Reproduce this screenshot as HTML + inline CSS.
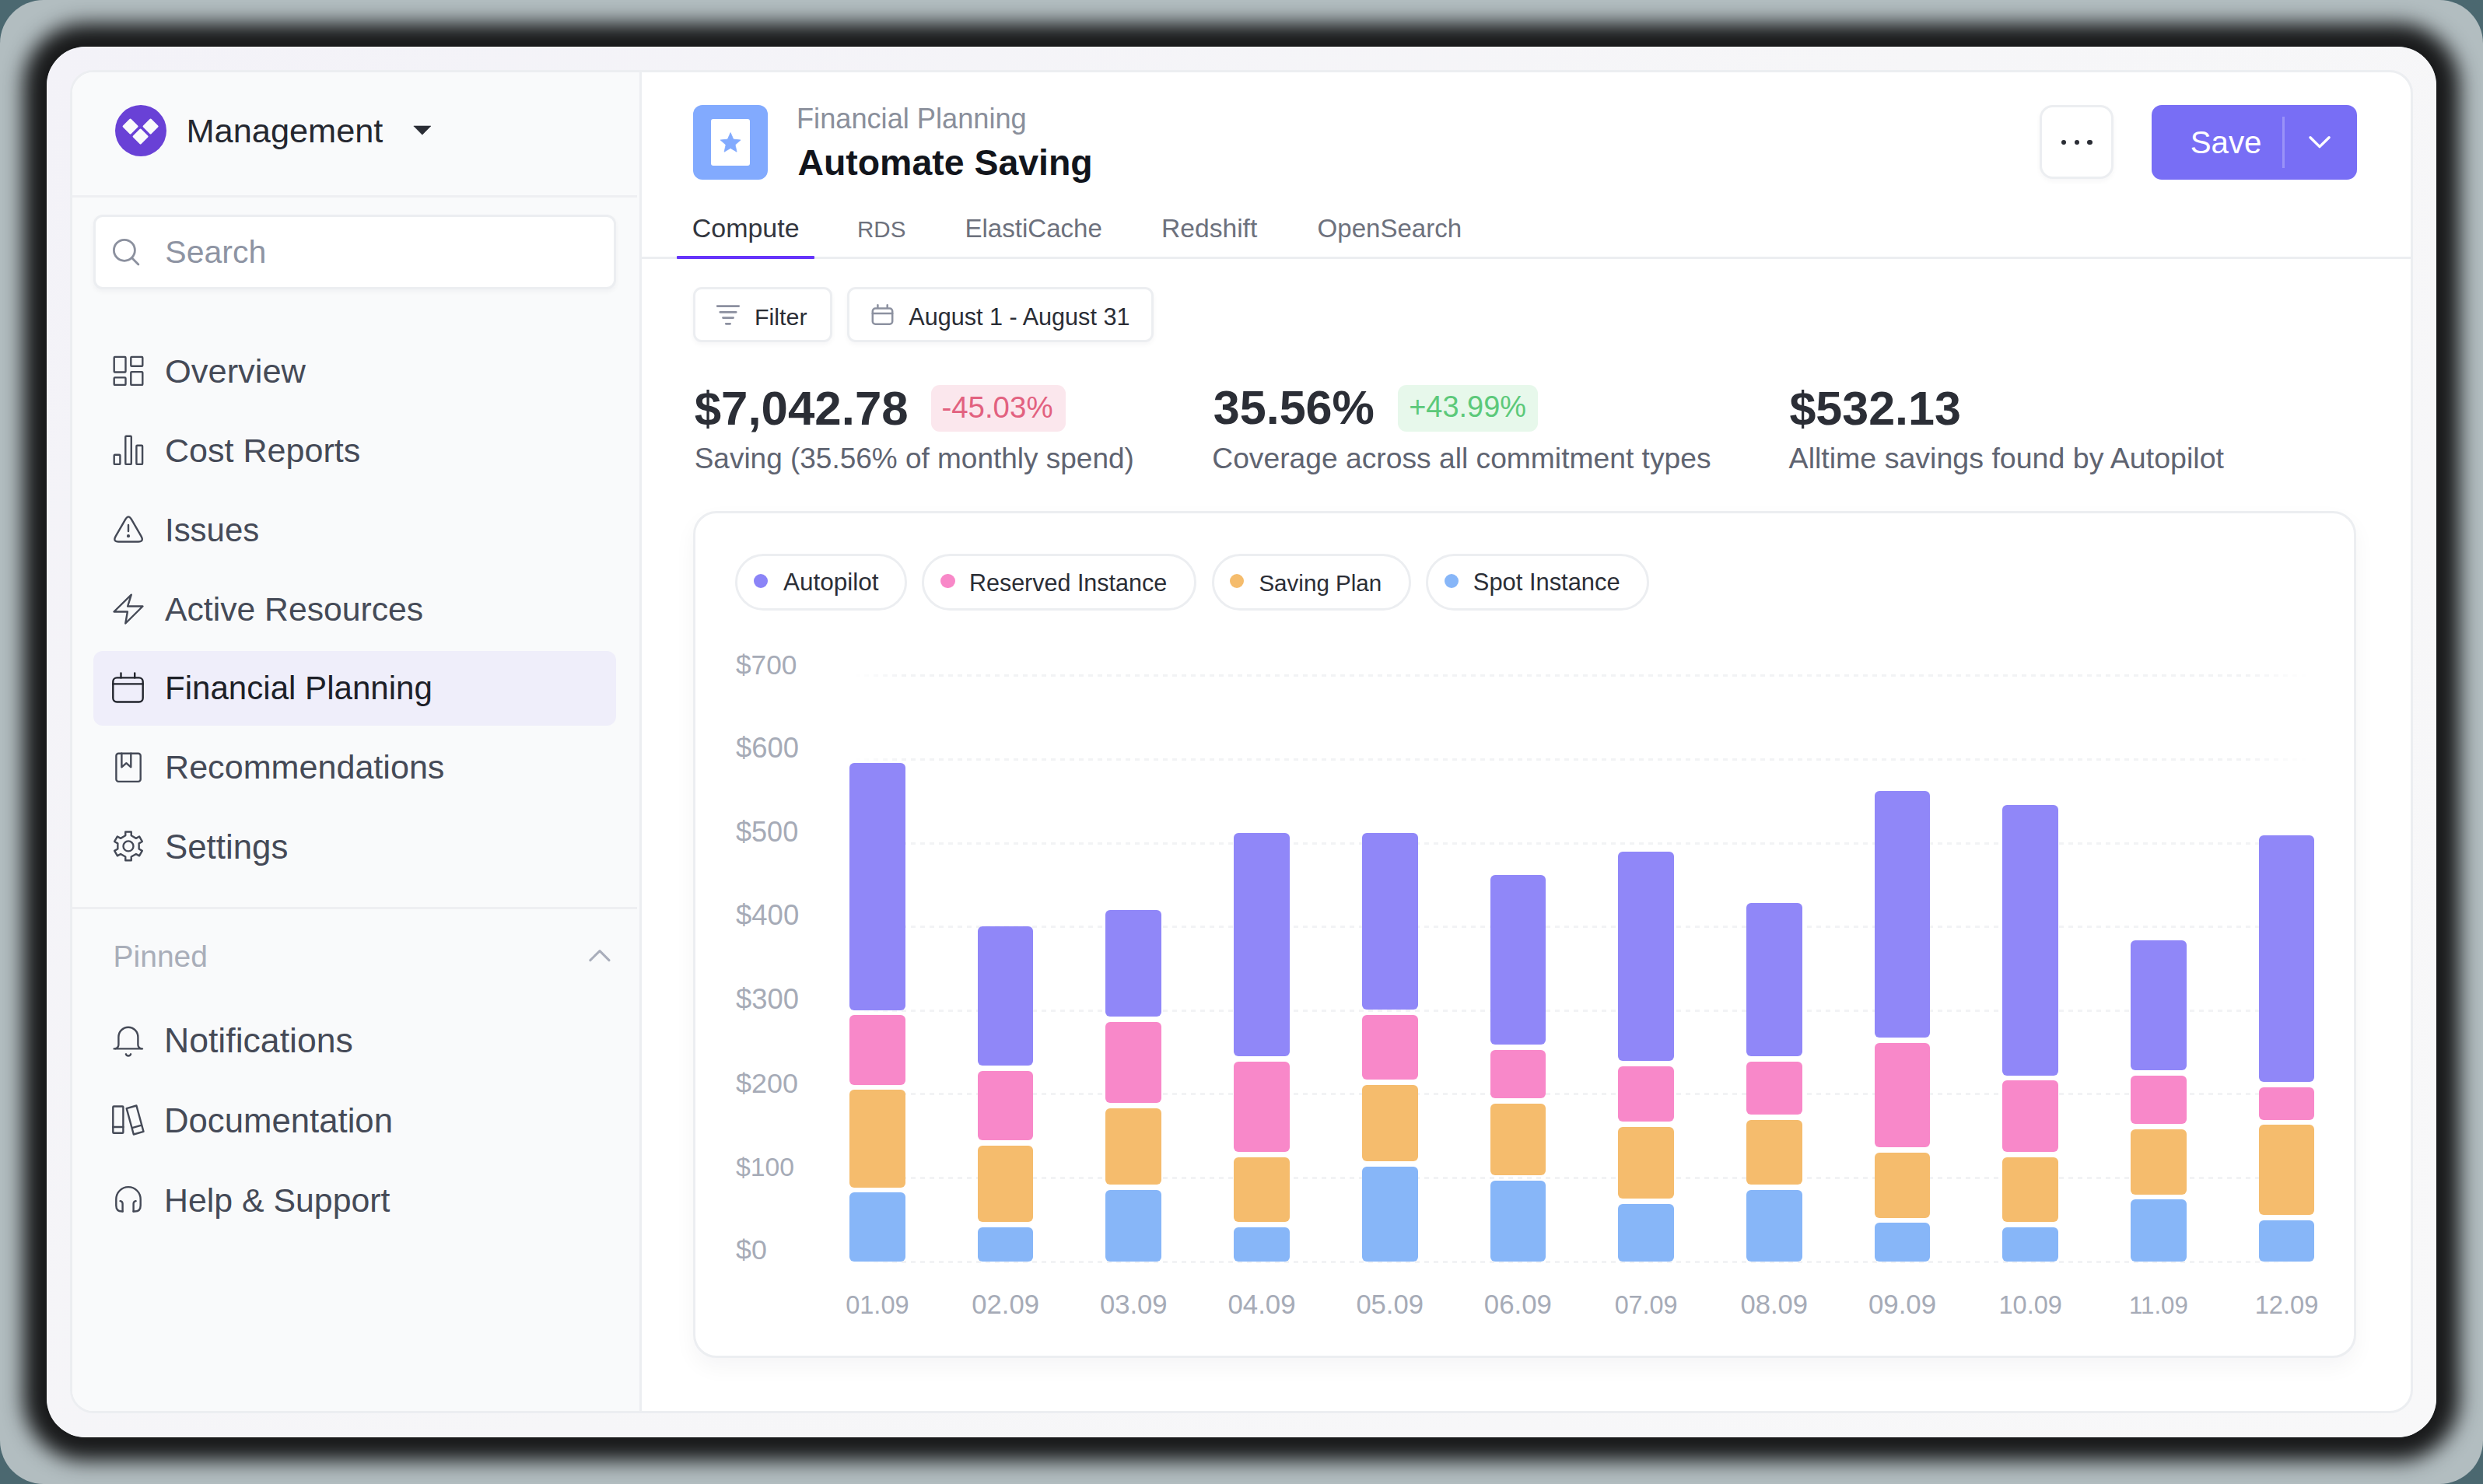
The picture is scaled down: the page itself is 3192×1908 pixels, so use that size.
<!DOCTYPE html>
<html><head><meta charset="utf-8"><style>
html,body{margin:0;padding:0;width:3192px;height:1908px;overflow:hidden;background:#4b6870;}
.a{position:absolute;}
.t{position:absolute;white-space:nowrap;line-height:1;font-family:"Liberation Sans",sans-serif;}
svg.a{overflow:visible}
</style></head><body>
<div class="a" style="left:0;top:0;width:3192px;height:1908px;border-radius:56px;background:rgb(178,189,192);"></div>
<div class="a" style="left:60px;top:60px;width:3072px;height:1788px;border-radius:50px;background:linear-gradient(135deg,#f3f2f8 0%,#f6f6f8 50%,#f8f8f9 100%);box-shadow:0 0 26px 30px rgb(25,26,27);"></div>
<div class="a" style="left:90px;top:90px;width:3012px;height:1727px;border-radius:30px;background:#ffffff;border:3px solid #eceef1;box-sizing:border-box;overflow:hidden"><div class="a" style="left:0;top:0;width:732px;height:1727px;background:#f9fafb;border-right:3px solid #eceef1;box-sizing:border-box"></div></div>
<div class="a" style="left:93.0px;top:250.5px;width:726.0px;height:3.0px;background:#eeeff2"></div>
<div class="a" style="left:147.8px;top:135px;width:66px;height:66px;border-radius:50%;background:#6941d6"></div>
<div class="a" style="left:160.2px;top:155.2px;width:15.2px;height:15.2px;background:#f9fafb;transform:rotate(45deg);border-radius:1.5px"></div>
<div class="a" style="left:186.3px;top:155.2px;width:15.2px;height:15.2px;background:#f9fafb;transform:rotate(45deg);border-radius:1.5px"></div>
<div class="a" style="left:173.2px;top:168.1px;width:15.2px;height:15.2px;background:#f9fafb;transform:rotate(45deg);border-radius:1.5px"></div>
<div class="t" style="left:239.5px;top:146.9px;font-size:43.34px;color:#24272f;font-weight:400;">Management</div>
<svg class="a" style="left:528px;top:158px;" width="30" height="20" viewBox="0 0 30 20"><path d="M3.8 4 L25.9 4 L14.85 15.2 Z" fill="#2a2d35" stroke="#2a2d35" stroke-width="0.6" stroke-linejoin="round"/></svg>
<div class="a" style="left:120.3px;top:276.2px;width:671.3px;height:95.7px;border-radius:12px;background:#fff;border:3px solid #eceef1;box-sizing:border-box;box-shadow:0 3px 6px rgba(16,24,40,0.04)"></div>
<svg class="a" style="left:136px;top:294px;" width="60" height="60" viewBox="0 0 60 60"><circle cx="23.9" cy="27.8" r="13.5" fill="none" stroke="#8b909e" stroke-width="2.8"/><path d="M34.2 38.2 L41.9 45.9" stroke="#8b909e" stroke-width="2.8" stroke-linecap="round"/></svg>
<div class="t" style="left:212.3px;top:304.3px;font-size:41.03px;color:#8e94a3;font-weight:400;">Search</div>
<div class="a" style="left:120px;top:837px;width:672px;height:96px;border-radius:12px;background:#efeefa"></div>
<svg class="a" style="left:136px;top:450px;" width="60" height="60" viewBox="0 0 60 60"><g fill="none" stroke="#454a57" stroke-width="2.4" stroke-linecap="round" stroke-linejoin="round"><rect x="10.7" y="8.9" width="14.8" height="19.6" rx="1"/><rect x="32.3" y="8.9" width="15" height="11.9" rx="1"/><rect x="10.7" y="35.4" width="14.8" height="9.5" rx="1"/><rect x="32.3" y="28.1" width="15" height="16.8" rx="1"/></g></svg>
<div class="t" style="left:212.0px;top:455.5px;font-size:43.43px;color:#454a57;font-weight:400;">Overview</div>
<svg class="a" style="left:136px;top:552px;" width="60" height="60" viewBox="0 0 60 60"><g fill="none" stroke="#454a57" stroke-width="2.4" stroke-linecap="round" stroke-linejoin="round"><rect x="10.7" y="32.8" width="7.7" height="12.1" rx="1"/><rect x="25.3" y="8.7" width="7.5" height="36.2" rx="1"/><rect x="39.4" y="20.8" width="7.7" height="24.1" rx="1"/></g></svg>
<div class="t" style="left:212.0px;top:557.7px;font-size:43.06px;color:#454a57;font-weight:400;">Cost Reports</div>
<svg class="a" style="left:136px;top:654px;" width="60" height="60" viewBox="0 0 60 60"><g fill="none" stroke="#454a57" stroke-width="2.4" stroke-linecap="round" stroke-linejoin="round"><path d="M25.3 13.6 Q29.1 7.2 32.9 13.6 L45.6 35.6 Q49.3 42.5 41.8 42.5 L16.4 42.5 Q8.9 42.5 12.6 35.6 Z"/><path d="M29 21 V29"/><circle cx="29" cy="35.2" r="0.9" fill="#454a57"/></g></svg>
<div class="t" style="left:212.0px;top:660.6px;font-size:41.94px;color:#454a57;font-weight:400;">Issues</div>
<svg class="a" style="left:136px;top:756px;" width="60" height="60" viewBox="0 0 60 60"><g fill="none" stroke="#454a57" stroke-width="2.4" stroke-linecap="round" stroke-linejoin="round"><path d="M32.8 8.7 L10.5 30.5 L27.9 30.5 L25.3 45.5 L47.5 23.5 L28.1 23.5 Z"/></g></svg>
<div class="t" style="left:212.0px;top:761.9px;font-size:42.69px;color:#454a57;font-weight:400;">Active Resources</div>
<svg class="a" style="left:136px;top:858px;" width="60" height="60" viewBox="0 0 60 60"><g fill="none" stroke="#22252d" stroke-width="2.4" stroke-linecap="round" stroke-linejoin="round"><rect x="9.3" y="13.4" width="38.4" height="31.1" rx="5"/><path d="M9.3 21.4 H47.7 M19.5 7.5 V13.4 M37.2 7.5 V13.4"/></g></svg>
<div class="t" style="left:212.0px;top:864.3px;font-size:42.08px;color:#1d2027;font-weight:400;">Financial Planning</div>
<svg class="a" style="left:136px;top:960px;" width="60" height="60" viewBox="0 0 60 60"><g fill="none" stroke="#454a57" stroke-width="2.4" stroke-linecap="round" stroke-linejoin="round"><rect x="13.4" y="8.7" width="31.3" height="36.2" rx="3"/><path d="M20.4 8.7 V26.3 L26.4 21.2 L32.3 26.3 V8.7"/></g></svg>
<div class="t" style="left:212.0px;top:965.3px;font-size:43.11px;color:#454a57;font-weight:400;">Recommendations</div>
<svg class="a" style="left:136px;top:1061px;" width="60" height="60" viewBox="0 0 60 60"><g fill="none" stroke="#454a57" stroke-width="2.4" stroke-linecap="round" stroke-linejoin="round"><path d="M25.25 13.30 L25.25 8.50 L32.75 8.50 L32.75 13.30 L38.90 16.85 L43.06 14.45 L46.81 20.95 L42.65 23.35 L42.65 30.45 L46.81 32.85 L43.06 39.35 L38.90 36.95 L32.75 40.50 L32.75 45.30 L25.25 45.30 L25.25 40.50 L19.10 36.95 L14.94 39.35 L11.19 32.85 L15.35 30.45 L15.35 23.35 L11.19 20.95 L14.94 14.45 L19.10 16.85 Z"/><circle cx="29" cy="26.9" r="6.5"/></g></svg>
<div class="t" style="left:212.0px;top:1066.6px;font-size:43.84px;color:#454a57;font-weight:400;">Settings</div>
<div class="a" style="left:93.0px;top:1166.3px;width:726.0px;height:3.0px;background:#eeeff2"></div>
<div class="t" style="left:145.6px;top:1209.5px;font-size:38.99px;color:#a9aeb9;font-weight:400;">Pinned</div>
<svg class="a" style="left:750px;top:1212px;" width="44" height="32" viewBox="0 0 44 32"><path d="M8.8 22.6 L21 10.6 L33 22.6" fill="none" stroke="#a9aebb" stroke-width="3" stroke-linecap="round" stroke-linejoin="round"/></svg>
<svg class="a" style="left:136px;top:1310px;" width="60" height="60" viewBox="0 0 60 60"><g fill="none" stroke="#454a57" stroke-width="2.4" stroke-linecap="round" stroke-linejoin="round"><path d="M10.7 38.4 H46.9"/><path d="M12.5 38.2 Q16.4 37 16.4 33 V23.5 A12.5 12.8 0 0 1 41.4 23.5 V33 Q41.4 37 45.2 38.2"/><path d="M25.9 45.3 A3.3 3.3 0 0 0 32.1 45.3"/></g></svg>
<div class="t" style="left:211.0px;top:1315.9px;font-size:44.59px;color:#454a57;font-weight:400;">Notifications</div>
<svg class="a" style="left:136px;top:1412px;" width="60" height="60" viewBox="0 0 60 60"><g fill="none" stroke="#454a57" stroke-width="2.4" stroke-linecap="round" stroke-linejoin="round"><rect x="9.3" y="10.5" width="13.1" height="34.2" rx="1"/><path d="M9.3 37 H22.4"/><path d="M26.7 13.1 L39.4 9.5 L48.5 42.9 L35.8 46.5 Z M34.8 37.8 L46.1 34.6"/></g></svg>
<div class="t" style="left:211.0px;top:1419.0px;font-size:43.71px;color:#454a57;font-weight:400;">Documentation</div>
<svg class="a" style="left:136px;top:1514px;" width="60" height="60" viewBox="0 0 60 60"><g fill="none" stroke="#454a57" stroke-width="2.4" stroke-linecap="round" stroke-linejoin="round"><path d="M21.6 43.5 V33.6 Q21.6 30.6 18.6 30.1"/><path d="M35.6 43.5 V33.6 Q35.6 30.6 38.6 30.1"/><path d="M21.6 43.5 H20.8 Q13.3 43.5 13.3 36 V28 A15.7 15.9 0 0 1 44.7 28 V36 Q44.7 43.5 37.2 43.5 H35.6"/></g></svg>
<div class="t" style="left:211.0px;top:1521.7px;font-size:42.83px;color:#454a57;font-weight:400;">Help &amp; Support</div>
<div class="a" style="left:891px;top:135px;width:96px;height:96px;border-radius:12px;background:#82aafe"></div>
<div class="a" style="left:913.9px;top:152.8px;width:50.1px;height:60.2px;border-radius:3px;background:#fff"></div>
<svg class="a" style="left:900px;top:140px;" width="80" height="86" viewBox="0 0 80 86"><path d="M39.10 30.60 L42.80 39.10 L52.03 40.00 L45.09 46.15 L47.09 55.20 L39.10 50.50 L31.11 55.20 L33.11 46.15 L26.17 40.00 L35.40 39.10 Z" fill="#82aafe" stroke="#82aafe" stroke-width="0.8" stroke-linejoin="round"/></svg>
<div class="t" style="left:1024.0px;top:135.0px;font-size:36.2px;color:#8a8f9b;font-weight:400;">Financial Planning</div>
<div class="t" style="left:1025.4px;top:186.1px;font-size:46.44px;color:#12151c;font-weight:700;">Automate Saving</div>
<div class="a" style="left:2622.3px;top:135.2px;width:95.2px;height:95px;border-radius:17px;background:#fff;border:3px solid #eceef1;box-sizing:border-box;box-shadow:0 3px 6px rgba(16,24,40,0.04)"></div>
<div class="a" style="left:2650.1px;top:179.8px;width:6.4px;height:6.4px;border-radius:50%;background:#2a2d35"></div>
<div class="a" style="left:2666.6px;top:179.8px;width:6.4px;height:6.4px;border-radius:50%;background:#2a2d35"></div>
<div class="a" style="left:2683.2px;top:179.8px;width:6.4px;height:6.4px;border-radius:50%;background:#2a2d35"></div>
<div class="a" style="left:2766px;top:135px;width:264px;height:96px;border-radius:13px;background:#786ef5"></div>
<div class="t" style="left:2815.7px;top:164.0px;font-size:40.27px;color:#ffffff;font-weight:400;">Save</div>
<div class="a" style="left:2934.4px;top:150.0px;width:2.2px;height:66.0px;background:#9a92f8"></div>
<svg class="a" style="left:2960px;top:168px;" width="44" height="30" viewBox="0 0 44 30"><path d="M10 8.7 L22 20.6 L34.1 8.7" fill="none" stroke="#fff" stroke-width="3.4" stroke-linecap="round" stroke-linejoin="round"/></svg>
<div class="a" style="left:822.0px;top:330.0px;width:2277.0px;height:3.0px;background:#eceef1"></div>
<div class="a" style="left:869.8px;top:329.0px;width:177.2px;height:4.0px;background:#6534fa;border-radius:1px"></div>
<div class="t" style="left:889.8px;top:276.6px;font-size:33.96px;color:#33363e;font-weight:400;">Compute</div>
<div class="t" style="left:1102.0px;top:280.4px;font-size:29.55px;color:#6d717d;font-weight:400;">RDS</div>
<div class="t" style="left:1240.4px;top:277.4px;font-size:33.1px;color:#6d717d;font-weight:400;">ElastiCache</div>
<div class="t" style="left:1493.0px;top:276.9px;font-size:33.61px;color:#6d717d;font-weight:400;">Redshift</div>
<div class="t" style="left:1693.6px;top:277.4px;font-size:33.06px;color:#6d717d;font-weight:400;">OpenSearch</div>
<div class="a" style="left:891.0px;top:369.0px;width:178.5px;height:70.5px;border-radius:11px;background:#fff;border:3px solid #eceef1;box-sizing:border-box;box-shadow:0 3px 6px rgba(16,24,40,0.04)"></div>
<div class="a" style="left:1089.2px;top:369.0px;width:394.1px;height:70.5px;border-radius:11px;background:#fff;border:3px solid #eceef1;box-sizing:border-box;box-shadow:0 3px 6px rgba(16,24,40,0.04)"></div>
<svg class="a" style="left:906px;top:374px;" width="60" height="60" viewBox="0 0 60 60"><g stroke="#8c90a0" stroke-width="2.8" stroke-linecap="round"><path d="M16.2 19.6 H43.7 M19.8 27.3 H40.2 M23.5 34.6 H36.6 M27.3 42.3 H32.6"/></g></svg>
<svg class="a" style="left:1106px;top:374px;" width="60" height="60" viewBox="0 0 60 60"><g fill="none" stroke="#8c91a0" stroke-width="2.5" stroke-linecap="round"><rect x="15.8" y="22.5" width="25.4" height="20.2" rx="3.5"/><path d="M15.8 28.9 H41.2 M22.4 18.2 V21.8 M34.7 18.2 V21.8"/></g></svg>
<div class="t" style="left:970.0px;top:391.9px;font-size:30.42px;color:#2a2d35;font-weight:400;">Filter</div>
<div class="t" style="left:1168.3px;top:391.8px;font-size:30.62px;color:#2a2d35;font-weight:400;">August 1 - August 31</div>
<div class="t" style="left:892.7px;top:493.8px;font-size:61.82px;color:#2b2e36;font-weight:700;">$7,042.78</div>
<div class="a" style="left:1197.2px;top:494.8px;width:173.3px;height:59.8px;border-radius:11px;background:#fbe7ed"></div>
<div class="t" style="left:1210.4px;top:504.5px;font-size:38.45px;color:#e2617f;font-weight:400;">-45.03%</div>
<div class="t" style="left:892.7px;top:571.2px;font-size:36.98px;color:#5f6471;font-weight:400;">Saving (35.56% of monthly spend)</div>
<div class="t" style="left:1559.7px;top:494.3px;font-size:61.12px;color:#2b2e36;font-weight:700;">35.56%</div>
<div class="a" style="left:1797.1px;top:494.8px;width:179.9px;height:59.8px;border-radius:11px;background:#e7f8eb"></div>
<div class="t" style="left:1811.2px;top:505.0px;font-size:37.93px;color:#5cc97a;font-weight:400;">+43.99%</div>
<div class="t" style="left:1558.3px;top:571.0px;font-size:37.23px;color:#5f6471;font-weight:400;">Coverage across all commitment types</div>
<div class="t" style="left:2300.4px;top:494.5px;font-size:61.0px;color:#2b2e36;font-weight:700;">$532.13</div>
<div class="t" style="left:2299.6px;top:570.7px;font-size:37.56px;color:#5f6471;font-weight:400;">Alltime savings found by Autopilot</div>
<div class="a" style="left:891px;top:657.3px;width:2138.4px;height:1088.6px;border-radius:30px;background:#fff;border:3px solid #eceef1;box-sizing:border-box;box-shadow:0 12px 28px rgba(16,24,40,0.045)"></div>
<div class="a" style="left:945.4px;top:711.9px;width:220.8px;height:73.3px;border-radius:40px;background:#fff;border:3px solid #eceef1;box-sizing:border-box"></div>
<div class="a" style="left:968.8px;top:737.5px;width:18.3px;height:18.3px;border-radius:50%;background:#8b84f7"></div>
<div class="t" style="left:1006.9px;top:733.1px;font-size:31.5px;color:#2b2e36;font-weight:400;">Autopilot</div>
<div class="a" style="left:1185.3px;top:711.9px;width:353.0px;height:73.3px;border-radius:40px;background:#fff;border:3px solid #eceef1;box-sizing:border-box"></div>
<div class="a" style="left:1209.3px;top:737.5px;width:18.3px;height:18.3px;border-radius:50%;background:#f888c8"></div>
<div class="t" style="left:1245.9px;top:734.0px;font-size:30.5px;color:#2b2e36;font-weight:400;">Reserved Instance</div>
<div class="a" style="left:1557.5px;top:711.9px;width:256.5px;height:73.3px;border-radius:40px;background:#fff;border:3px solid #eceef1;box-sizing:border-box"></div>
<div class="a" style="left:1580.9px;top:737.5px;width:18.3px;height:18.3px;border-radius:50%;background:#f5bc6c"></div>
<div class="t" style="left:1618.4px;top:734.7px;font-size:29.59px;color:#2b2e36;font-weight:400;">Saving Plan</div>
<div class="a" style="left:1833.2px;top:711.9px;width:287.0px;height:73.3px;border-radius:40px;background:#fff;border:3px solid #eceef1;box-sizing:border-box"></div>
<div class="a" style="left:1857.2px;top:737.5px;width:18.3px;height:18.3px;border-radius:50%;background:#87b6f8"></div>
<div class="t" style="left:1893.8px;top:733.6px;font-size:30.89px;color:#2b2e36;font-weight:400;">Spot Instance</div>
<div class="a" style="left:1099px;top:867.3px;width:1868px;height:3px;background:repeating-linear-gradient(90deg,#f2f3f5 0 6px,transparent 6px 12px);-webkit-mask-image:linear-gradient(90deg,transparent 0,#000 60px,#000 1790px,transparent 1868px)"></div>
<div class="a" style="left:1099px;top:974.9px;width:1868px;height:3px;background:repeating-linear-gradient(90deg,#f2f3f5 0 6px,transparent 6px 12px);-webkit-mask-image:linear-gradient(90deg,transparent 0,#000 60px,#000 1790px,transparent 1868px)"></div>
<div class="a" style="left:1099px;top:1082.5px;width:1868px;height:3px;background:repeating-linear-gradient(90deg,#f2f3f5 0 6px,transparent 6px 12px);-webkit-mask-image:linear-gradient(90deg,transparent 0,#000 60px,#000 1790px,transparent 1868px)"></div>
<div class="a" style="left:1099px;top:1190.1px;width:1868px;height:3px;background:repeating-linear-gradient(90deg,#f2f3f5 0 6px,transparent 6px 12px);-webkit-mask-image:linear-gradient(90deg,transparent 0,#000 60px,#000 1790px,transparent 1868px)"></div>
<div class="a" style="left:1099px;top:1297.7px;width:1868px;height:3px;background:repeating-linear-gradient(90deg,#f2f3f5 0 6px,transparent 6px 12px);-webkit-mask-image:linear-gradient(90deg,transparent 0,#000 60px,#000 1790px,transparent 1868px)"></div>
<div class="a" style="left:1099px;top:1405.3px;width:1868px;height:3px;background:repeating-linear-gradient(90deg,#f2f3f5 0 6px,transparent 6px 12px);-webkit-mask-image:linear-gradient(90deg,transparent 0,#000 60px,#000 1790px,transparent 1868px)"></div>
<div class="a" style="left:1099px;top:1513.0px;width:1868px;height:3px;background:repeating-linear-gradient(90deg,#f2f3f5 0 6px,transparent 6px 12px);-webkit-mask-image:linear-gradient(90deg,transparent 0,#000 60px,#000 1790px,transparent 1868px)"></div>
<div class="a" style="left:1099px;top:1620.6px;width:1868px;height:3px;background:repeating-linear-gradient(90deg,#f2f3f5 0 6px,transparent 6px 12px);-webkit-mask-image:linear-gradient(90deg,transparent 0,#000 60px,#000 1790px,transparent 1868px)"></div>
<div class="t" style="left:946.0px;top:837.3px;font-size:35.29px;color:#a6abb7;font-weight:400;">$700</div>
<div class="t" style="left:946.0px;top:944.0px;font-size:36.36px;color:#a6abb7;font-weight:400;">$600</div>
<div class="t" style="left:946.0px;top:1051.9px;font-size:36.05px;color:#a6abb7;font-weight:400;">$500</div>
<div class="t" style="left:946.0px;top:1159.1px;font-size:36.5px;color:#a6abb7;font-weight:400;">$400</div>
<div class="t" style="left:946.0px;top:1266.9px;font-size:36.36px;color:#a6abb7;font-weight:400;">$300</div>
<div class="t" style="left:946.0px;top:1374.8px;font-size:35.92px;color:#a6abb7;font-weight:400;">$200</div>
<div class="t" style="left:946.0px;top:1484.3px;font-size:33.76px;color:#a6abb7;font-weight:400;">$100</div>
<div class="t" style="left:946.0px;top:1590.2px;font-size:35.78px;color:#a6abb7;font-weight:400;">$0</div>
<div class="a" style="left:1092.0px;top:981.0px;width:71.8px;height:317.5px;border-radius:6px;background:#9087f8"></div>
<div class="a" style="left:1092.0px;top:1305.3px;width:71.8px;height:89.3px;border-radius:6px;background:#f888c9"></div>
<div class="a" style="left:1092.0px;top:1401.3px;width:71.8px;height:125.3px;border-radius:6px;background:#f5bc6d"></div>
<div class="a" style="left:1092.0px;top:1533.4px;width:71.8px;height:88.9px;border-radius:6px;background:#87b6f8"></div>
<div class="t" style="left:827.9px;width:600px;text-align:center;top:1661.8px;font-size:32.57px;color:#a6abb7;font-weight:400;">01.09</div>
<div class="a" style="left:1256.7px;top:1190.6px;width:71.8px;height:179.7px;border-radius:6px;background:#9087f8"></div>
<div class="a" style="left:1256.7px;top:1377.0px;width:71.8px;height:89.3px;border-radius:6px;background:#f888c9"></div>
<div class="a" style="left:1256.7px;top:1473.0px;width:71.8px;height:98.4px;border-radius:6px;background:#f5bc6d"></div>
<div class="a" style="left:1256.7px;top:1578.2px;width:71.8px;height:44.1px;border-radius:6px;background:#87b6f8"></div>
<div class="t" style="left:992.6px;width:600px;text-align:center;top:1660.1px;font-size:34.61px;color:#a6abb7;font-weight:400;">02.09</div>
<div class="a" style="left:1421.4px;top:1170.0px;width:71.8px;height:137.4px;border-radius:6px;background:#9087f8"></div>
<div class="a" style="left:1421.4px;top:1314.2px;width:71.8px;height:104.2px;border-radius:6px;background:#f888c9"></div>
<div class="a" style="left:1421.4px;top:1424.7px;width:71.8px;height:98.5px;border-radius:6px;background:#f5bc6d"></div>
<div class="a" style="left:1421.4px;top:1530.0px;width:71.8px;height:92.3px;border-radius:6px;background:#87b6f8"></div>
<div class="t" style="left:1157.3px;width:600px;text-align:center;top:1660.1px;font-size:34.65px;color:#a6abb7;font-weight:400;">03.09</div>
<div class="a" style="left:1586.1px;top:1070.9px;width:71.8px;height:287.4px;border-radius:6px;background:#9087f8"></div>
<div class="a" style="left:1586.1px;top:1365.0px;width:71.8px;height:116.2px;border-radius:6px;background:#f888c9"></div>
<div class="a" style="left:1586.1px;top:1488.0px;width:71.8px;height:83.0px;border-radius:6px;background:#f5bc6d"></div>
<div class="a" style="left:1586.1px;top:1577.7px;width:71.8px;height:44.6px;border-radius:6px;background:#87b6f8"></div>
<div class="t" style="left:1322.0px;width:600px;text-align:center;top:1659.9px;font-size:34.85px;color:#a6abb7;font-weight:400;">04.09</div>
<div class="a" style="left:1750.8px;top:1070.9px;width:71.8px;height:227.1px;border-radius:6px;background:#9087f8"></div>
<div class="a" style="left:1750.8px;top:1304.8px;width:71.8px;height:83.5px;border-radius:6px;background:#f888c9"></div>
<div class="a" style="left:1750.8px;top:1394.6px;width:71.8px;height:98.5px;border-radius:6px;background:#f5bc6d"></div>
<div class="a" style="left:1750.8px;top:1499.9px;width:71.8px;height:122.4px;border-radius:6px;background:#87b6f8"></div>
<div class="t" style="left:1486.7px;width:600px;text-align:center;top:1660.1px;font-size:34.61px;color:#a6abb7;font-weight:400;">05.09</div>
<div class="a" style="left:1915.5px;top:1124.8px;width:71.8px;height:218.4px;border-radius:6px;background:#9087f8"></div>
<div class="a" style="left:1915.5px;top:1350.0px;width:71.8px;height:62.2px;border-radius:6px;background:#f888c9"></div>
<div class="a" style="left:1915.5px;top:1419.0px;width:71.8px;height:92.3px;border-radius:6px;background:#f5bc6d"></div>
<div class="a" style="left:1915.5px;top:1518.0px;width:71.8px;height:104.3px;border-radius:6px;background:#87b6f8"></div>
<div class="t" style="left:1651.4px;width:600px;text-align:center;top:1659.9px;font-size:34.81px;color:#a6abb7;font-weight:400;">06.09</div>
<div class="a" style="left:2080.2px;top:1095.2px;width:71.8px;height:268.8px;border-radius:6px;background:#9087f8"></div>
<div class="a" style="left:2080.2px;top:1370.7px;width:71.8px;height:71.6px;border-radius:6px;background:#f888c9"></div>
<div class="a" style="left:2080.2px;top:1449.0px;width:71.8px;height:92.4px;border-radius:6px;background:#f5bc6d"></div>
<div class="a" style="left:2080.2px;top:1548.1px;width:71.8px;height:74.2px;border-radius:6px;background:#87b6f8"></div>
<div class="t" style="left:1816.1px;width:600px;text-align:center;top:1662.0px;font-size:32.33px;color:#a6abb7;font-weight:400;">07.09</div>
<div class="a" style="left:2244.9px;top:1161.1px;width:71.8px;height:197.2px;border-radius:6px;background:#9087f8"></div>
<div class="a" style="left:2244.9px;top:1365.0px;width:71.8px;height:68.0px;border-radius:6px;background:#f888c9"></div>
<div class="a" style="left:2244.9px;top:1439.7px;width:71.8px;height:83.5px;border-radius:6px;background:#f5bc6d"></div>
<div class="a" style="left:2244.9px;top:1530.0px;width:71.8px;height:92.3px;border-radius:6px;background:#87b6f8"></div>
<div class="t" style="left:1980.8px;width:600px;text-align:center;top:1660.1px;font-size:34.61px;color:#a6abb7;font-weight:400;">08.09</div>
<div class="a" style="left:2409.6px;top:1016.9px;width:71.8px;height:317.5px;border-radius:6px;background:#9087f8"></div>
<div class="a" style="left:2409.6px;top:1341.1px;width:71.8px;height:134.4px;border-radius:6px;background:#f888c9"></div>
<div class="a" style="left:2409.6px;top:1481.7px;width:71.8px;height:84.1px;border-radius:6px;background:#f5bc6d"></div>
<div class="a" style="left:2409.6px;top:1572.0px;width:71.8px;height:50.3px;border-radius:6px;background:#87b6f8"></div>
<div class="t" style="left:2145.5px;width:600px;text-align:center;top:1659.9px;font-size:34.85px;color:#a6abb7;font-weight:400;">09.09</div>
<div class="a" style="left:2574.3px;top:1035.0px;width:71.8px;height:347.6px;border-radius:6px;background:#9087f8"></div>
<div class="a" style="left:2574.3px;top:1388.9px;width:71.8px;height:92.3px;border-radius:6px;background:#f888c9"></div>
<div class="a" style="left:2574.3px;top:1488.0px;width:71.8px;height:83.0px;border-radius:6px;background:#f5bc6d"></div>
<div class="a" style="left:2574.3px;top:1577.7px;width:71.8px;height:44.6px;border-radius:6px;background:#87b6f8"></div>
<div class="t" style="left:2310.2px;width:600px;text-align:center;top:1661.9px;font-size:32.53px;color:#a6abb7;font-weight:400;">10.09</div>
<div class="a" style="left:2739.0px;top:1209.2px;width:71.8px;height:167.0px;border-radius:6px;background:#9087f8"></div>
<div class="a" style="left:2739.0px;top:1382.7px;width:71.8px;height:62.8px;border-radius:6px;background:#f888c9"></div>
<div class="a" style="left:2739.0px;top:1451.5px;width:71.8px;height:84.0px;border-radius:6px;background:#f5bc6d"></div>
<div class="a" style="left:2739.0px;top:1541.5px;width:71.8px;height:80.8px;border-radius:6px;background:#87b6f8"></div>
<div class="t" style="left:2474.9px;width:600px;text-align:center;top:1663.0px;font-size:31.22px;color:#a6abb7;font-weight:400;">11.09</div>
<div class="a" style="left:2903.7px;top:1073.9px;width:71.8px;height:317.0px;border-radius:6px;background:#9087f8"></div>
<div class="a" style="left:2903.7px;top:1397.5px;width:71.8px;height:42.0px;border-radius:6px;background:#f888c9"></div>
<div class="a" style="left:2903.7px;top:1445.5px;width:71.8px;height:116.8px;border-radius:6px;background:#f5bc6d"></div>
<div class="a" style="left:2903.7px;top:1568.8px;width:71.8px;height:53.5px;border-radius:6px;background:#87b6f8"></div>
<div class="t" style="left:2639.6px;width:600px;text-align:center;top:1661.7px;font-size:32.69px;color:#a6abb7;font-weight:400;">12.09</div>
</body></html>
